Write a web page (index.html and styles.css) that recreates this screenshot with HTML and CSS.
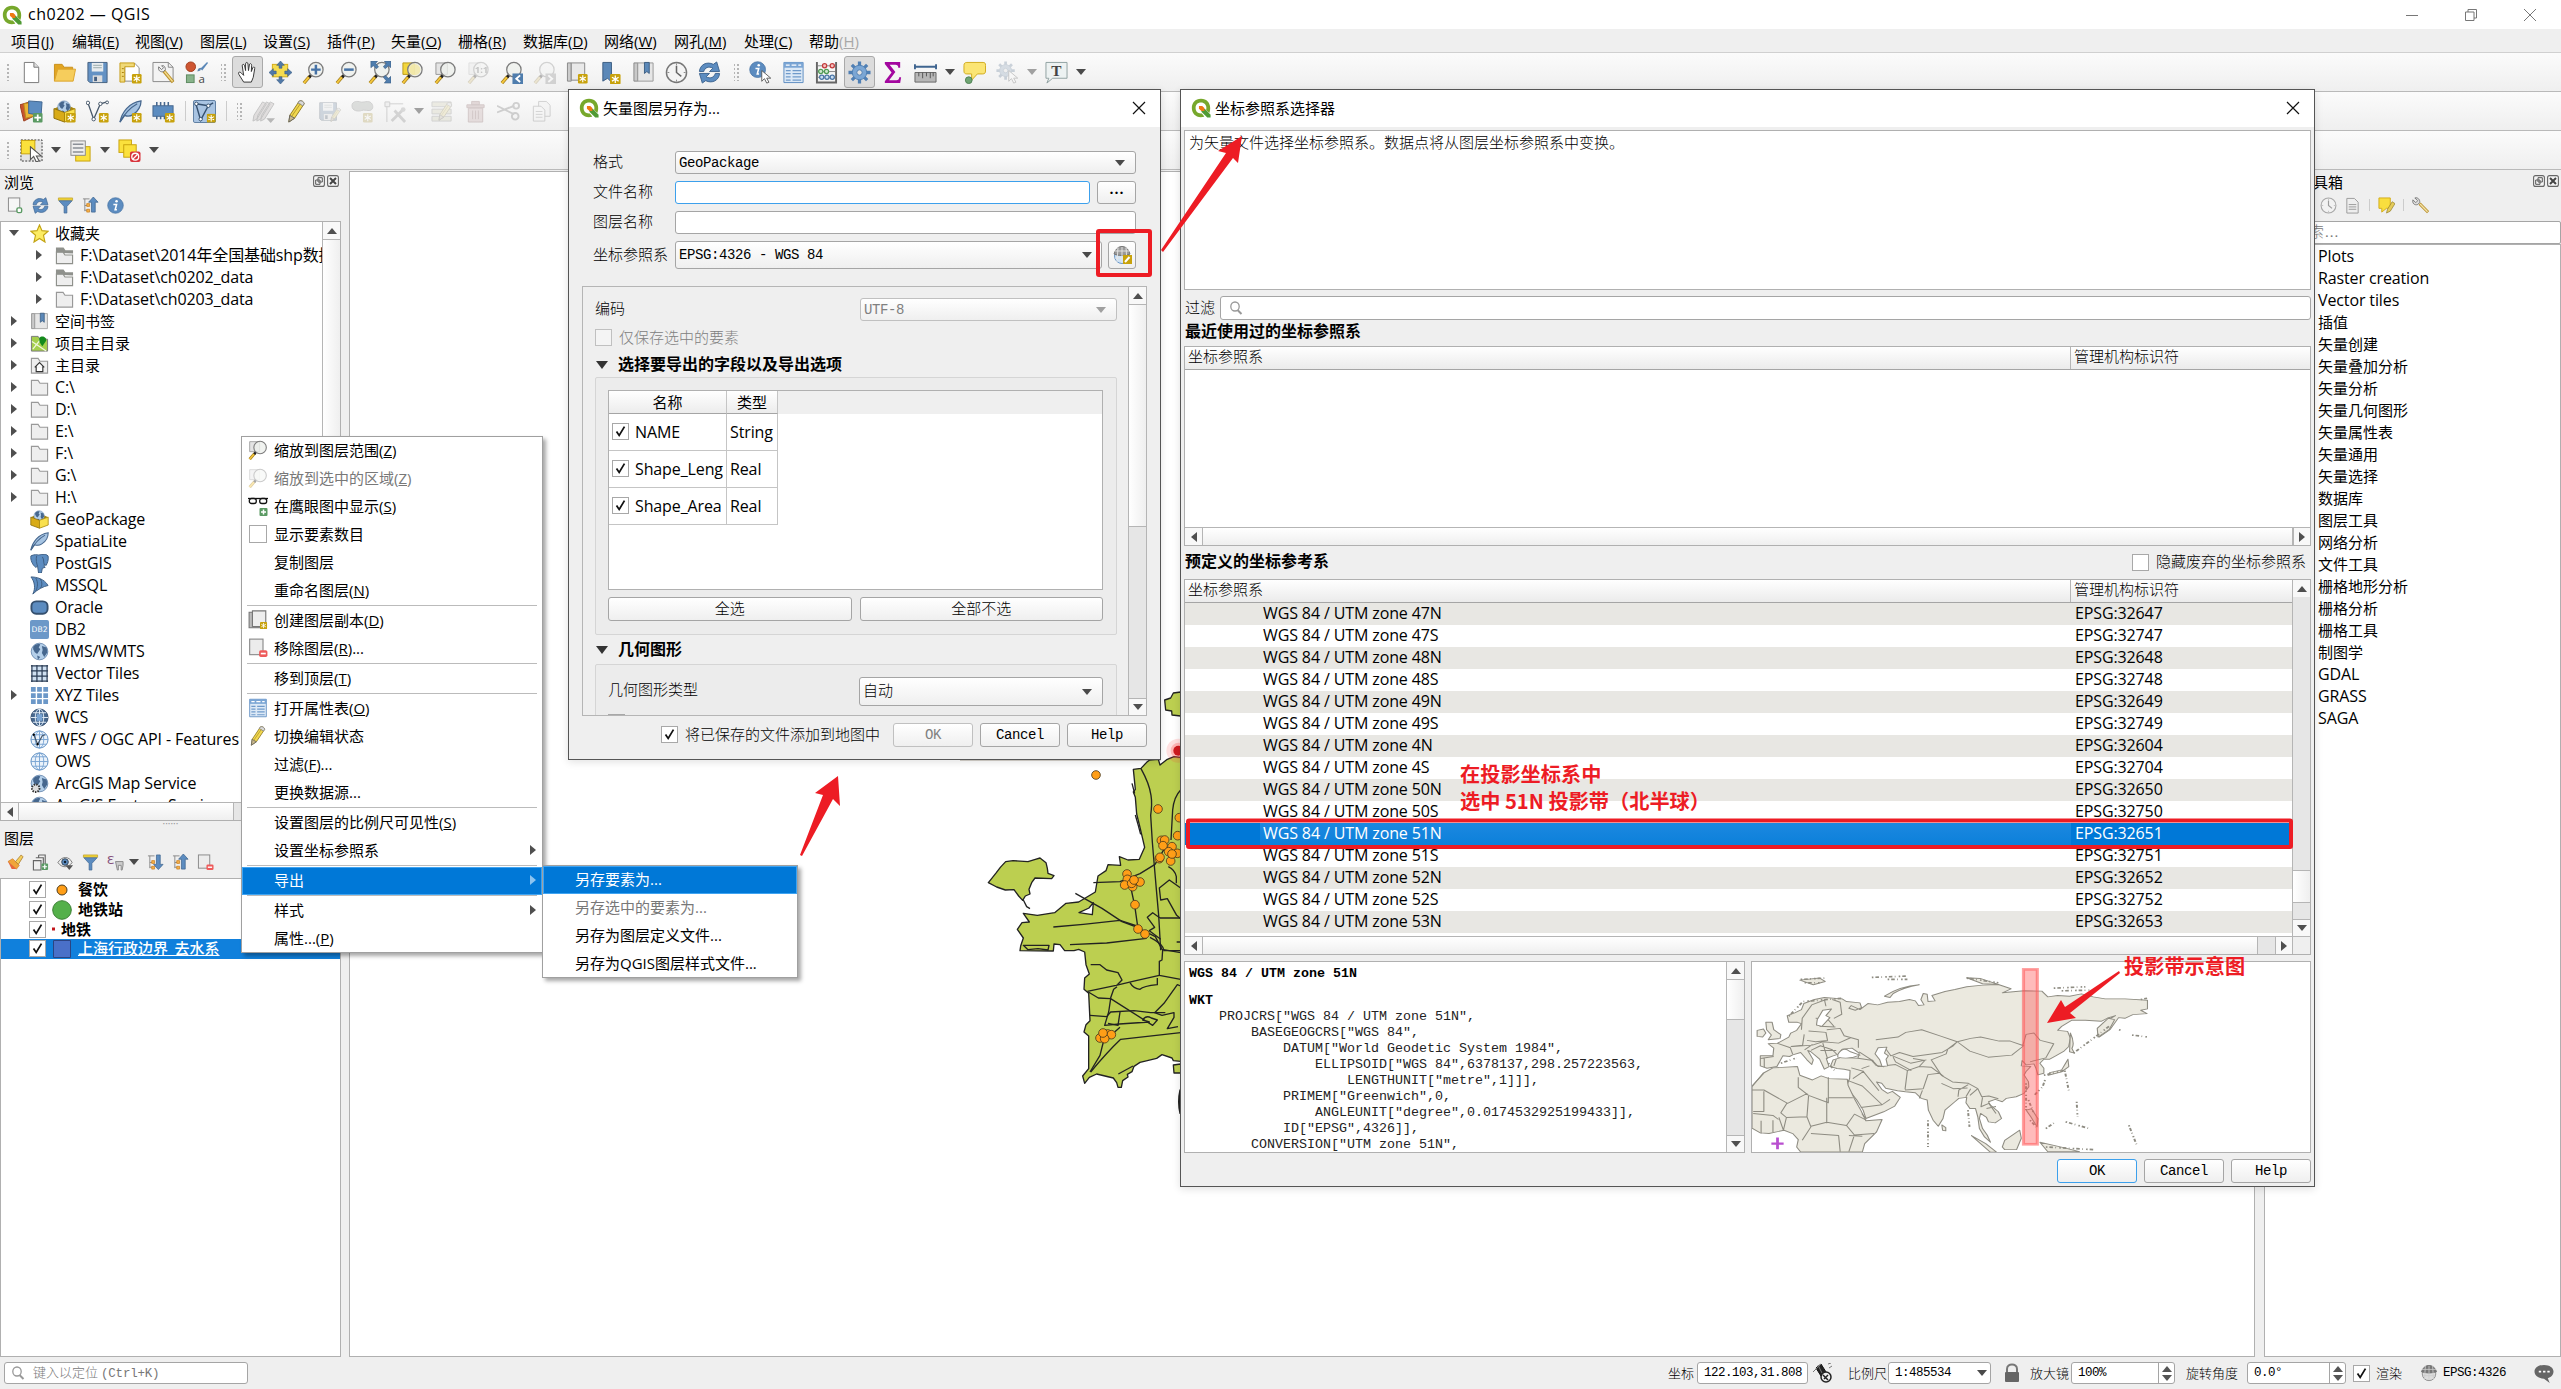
FILE: index.html
```html
<!DOCTYPE html>
<html lang="zh-CN">
<head>
<meta charset="utf-8">
<title>ch0202 — QGIS</title>
<link rel="stylesheet" href="styles.css">
</head>
<body>
<svg class="defs" aria-hidden="true">
  <symbol id="logo" viewBox="0 0 24 24"><path d="M12 1C5 1 1 6 1 12s4 11 11 11c2 0 3-.3 4-.7L13 18.500C8 19 5.500 16 5.500 12S8 5.500 12 5.500s6.500 3 6.500 6.500l-.3 2.500L22 18c.8-1.700 1-4 1-6 0-6-4-11-11-11z" fill="#77a82c"/><path d="M12.500 13h4l7 7v3.500h-4l-7-7z" fill="#4f9a34"/><path d="M9.500 9.500h4l2.500 2.500v3.500h-3.500L9.500 13z" fill="#ee7913"/></symbol>
  <symbol id="b-new" viewBox="0 0 12 12"><rect x=".5" y=".5" width="11" height="11" rx="1.500" fill="#c8a20c"/><path d="M6 2v8M2.500 4l7 4M9.500 4l-7 4" stroke="#fff" stroke-width="1.300"/></symbol>
  <symbol id="mag" viewBox="0 0 24 24"><path d="M2 23l6-7" stroke="#a07c1c" stroke-width="3.500"/><path d="M2 23l5.500-6.500" stroke="#f4c63c" stroke-width="2"/><path d="M7.500 17l2-2.500" stroke="#222" stroke-width="3"/><circle cx="14.500" cy="9" r="7.500" fill="#eef0ec" fill-opacity=".8" stroke="#7c7c7c" stroke-width="1.300"/></symbol>
  <symbol id="new" viewBox="0 0 24 24"><path d="M4.500 1.500h10l5 5v16h-15z" fill="#fff" stroke="#777"/><path d="M14.500 1.500v5h5" fill="#ddd" stroke="#777"/></symbol>
  <symbol id="open" viewBox="0 0 24 24"><path d="M1.500 21V3.500h8l2 3h9V10" fill="#e2a522" stroke="#c98f1a"/><path d="M1.500 21L5 8.500h18.500L21 21z" fill="#f6cd5c" stroke="#dba42c"/></symbol>
  <symbol id="save" viewBox="0 0 24 24"><path d="M2 1.500h20v21H4l-2-2z" fill="#6492c4" stroke="#45607e"/><path d="M6 2h12v9H6z" fill="#e8ecef"/><path d="M7.500 4.500h9M7.500 7h9" stroke="#9aa"/><path d="M7 15h10v7H7z" fill="#ddd"/><path d="M8.500 16.500h3V21h-3z" fill="#455f80"/></symbol>
  <symbol id="layout" viewBox="0 0 24 24"><path d="M6 3h11l4 4v14H6z" fill="#fff" stroke="#888"/><path d="M1 2h15v4H6v16H1z" fill="#f0d978" stroke="#c79c17"/><path d="M3 8h2M3 12h2M3 16h2M9 4h0" stroke="#a87d0c"/><use href="#b-new" x="13" y="13" width="11" height="11"/></symbol>
  <symbol id="mgr" viewBox="0 0 24 24"><path d="M1 1.500h16l5 5v15H1z" fill="#f3f3f3" stroke="#888"/><path d="M17 1.500v5h5" fill="none" stroke="#888"/><path d="M12 10l10 12" stroke="#b98f2a" stroke-width="3.600"/><path d="M13 11l8.500 10.500" stroke="#f2d98a" stroke-width="1.600"/><path d="M7 6c-1 4 2 6 5 5l2-2c0-3-2-5-4-4l2 2-2 2z" fill="#eee" stroke="#777"/></symbol>
  <symbol id="style" viewBox="0 0 24 24"><circle cx="6" cy="6" r="5" fill="#ce5632" stroke="#a3401f"/><path d="M13 11c0-3 2-4 4-4l-1 3z" fill="#5a83ad"/><path d="M16 8l7-7 1 1-6 8z" fill="#5b88b8"/><rect x="1.500" y="14.500" width="8" height="8" fill="#88b38a" stroke="#5d8a60"/><text x="14" y="23" font-size="12" font-family="Open Sans" fill="#444">a</text></symbol>
  <symbol id="hand" viewBox="0 0 24 24"><path d="M8 22L3 14c-1-2 0-3 2-2l3 3L6.500 5c0-2 2-2 2.500 0l1 5V3c0-2 2.300-2 2.500 0l.5 7 1-6c.3-2 2.300-1.500 2.300.5L16 11l1.500-4c.8-1.500 2.500-.8 2 1L18 17l-2 5z" fill="#fff" stroke="#333"/></symbol>
  <symbol id="pan" viewBox="0 0 24 24"><rect x="3.500" y="3.500" width="16" height="13" fill="#f5dc4e" stroke="#d2ab17"/><path d="M12 0l4 4.500h-2.500v3h-3v-3H8zM24 12l-4.500 4v-2.500h-3v-3h3V8zM12 24l-4-4.500h2.500v-3h3v3H16zM0 12l4.500-4v2.500h3v3h-3V16z" fill="#5079a8" stroke="#3c5d82" stroke-width=".6"/></symbol>
  <symbol id="zin" viewBox="0 0 24 24"><use href="#mag"/><path d="M9.500 9h10M14.500 4v10" stroke="#4672a6" stroke-width="2.600"/></symbol>
  <symbol id="zout" viewBox="0 0 24 24"><use href="#mag"/><path d="M9.500 9h10" stroke="#4672a6" stroke-width="2.600"/></symbol>
  <symbol id="zfull" viewBox="0 0 24 24"><use href="#mag"/><path d="M3 0h7L8 2.500 11 6 9 8 5.500 5 3 7zM24 0v7l-2.500-2L18 8l-2-2 3-3.500L17 0zM24 23h-7l2-2.500L16 17l2-2 3.500 3 2.500-2z" fill="#4f7dad" stroke="#3c5d82" stroke-width=".6"/></symbol>
  <symbol id="zsel" viewBox="0 0 24 24"><path d="M2 2h12v12H2z" fill="#f3d63c" stroke="#b99a1c"/><use href="#mag"/><circle cx="14.500" cy="9" r="5.800" fill="#f3e79a" fill-opacity=".7"/></symbol>
  <symbol id="zlay" viewBox="0 0 24 24"><path d="M2 2h12v12H2z" fill="#e4e4e4" stroke="#999"/><use href="#mag"/></symbol>
  <symbol id="z11" viewBox="0 0 24 24"><path d="M2 2h12v12H2z" fill="#e4e4e4" stroke="#aaa"/><use href="#mag"/><text x="8" y="13" font-size="10" font-weight="bold" font-family="Open Sans" fill="#555">1:1</text></symbol>
  <symbol id="zlast" viewBox="0 0 24 24"><use href="#mag"/><path d="M13 13h11v11H13z" fill="#4f7dad"/><path d="M21 15l-4 3.500 4 3.500" fill="none" stroke="#fff" stroke-width="2"/></symbol>
  <symbol id="znext" viewBox="0 0 24 24"><use href="#mag"/><path d="M13 13h11v11H13z" fill="#888"/><path d="M16 15l4 3.500-4 3.500" fill="none" stroke="#fff" stroke-width="2"/></symbol>
  <symbol id="mapview" viewBox="0 0 24 24"><path d="M1.500 2h4v19h-4z" fill="#ccc" stroke="#888"/><path d="M5.500 2h14v18h-14z" fill="#e9e9e9" stroke="#888"/><use href="#b-new" x="12" y="13" width="11" height="11"/></symbol>
  <symbol id="bmnew" viewBox="0 0 24 24"><path d="M4 1.500h9V22l-4-4-5 3z" fill="#5b88b8" stroke="#3c5d82"/><use href="#b-new" x="11" y="13" width="12" height="12"/></symbol>
  <symbol id="book" viewBox="0 0 24 24"><path d="M2 2h4v19H2z" fill="#c9c9c9" stroke="#888"/><path d="M6 2h16v19H6z" fill="#e6e6e6" stroke="#999"/><path d="M13 1.500h5V13l-2.500-2L13 13z" fill="#5b88b8" stroke="#3c5d82"/></symbol>
  <symbol id="clock" viewBox="0 0 24 24"><circle cx="12" cy="12" r="10.500" fill="#f4f4f4" stroke="#777" stroke-width="1.500"/><path d="M12 5v7l5 4" fill="none" stroke="#666" stroke-width="1.600"/><path d="M12 2.500v2M12 19.500v2M2.500 12h2M19.500 12h2" stroke="#888"/></symbol>
  <symbol id="refresh" viewBox="0 0 24 24"><path d="M1.500 11C2 4 9 0 16 3.500L19.500 1l3 10H12l3.500-3.500C11 5 7 7 6 11z" fill="#5c8cc0" stroke="#3f6590"/><path d="M22.500 13C22 20 15 24 8 20.500L4.500 23l-3-10H12l-3.500 3.500C13 19 17 17 18 13z" fill="#5c8cc0" stroke="#3f6590"/></symbol>
  <symbol id="info" viewBox="0 0 24 24"><circle cx="12" cy="12" r="11" fill="#5c8cc0" stroke="#4874a4"/><circle cx="13.500" cy="6" r="1.800" fill="#fff"/><path d="M9 10.500h4.500L11.500 18h2.500" fill="none" stroke="#fff" stroke-width="2.200"/></symbol>
  <symbol id="cursor" viewBox="0 0 12 16"><path d="M1 1v12l3-3 2.500 5 2.500-1-2.500-4.500H11z" fill="#fff" stroke="#555"/></symbol>
  <symbol id="ident" viewBox="0 0 24 24"><use href="#info" x="0" y="0" width="18" height="18"/><use href="#cursor" x="12" y="9" width="12" height="15"/></symbol>
  <symbol id="table" viewBox="0 0 24 24"><path d="M2 1.500h20v21H2z" fill="#dce9f6" stroke="#5c8cc0"/><path d="M2 1.500h20V7H2z" fill="#7aa5d4"/><path d="M4 4.300h4M10 4.300h5M17 4.300h3" stroke="#fff" stroke-width="1.300"/><path d="M4 10h5M11 10h9M4 13.300h5M11 13.300h9M4 16.600h5M11 16.600h9M4 20h5M11 20h9" stroke="#6f9aca" stroke-width="1.300"/></symbol>
  <symbol id="abacus" viewBox="0 0 24 24"><path d="M2 1v22M22 1v22M1 22.500h22" stroke="#666" stroke-width="2"/><path d="M3 5h18M3 11h18M3 17h18" stroke="#888"/><g stroke-width="1.300"><g fill="#f6c2c2" stroke="#c23b3b"><circle cx="10" cy="5" r="2.200"/><circle cx="18" cy="5" r="2.200"/></g><g fill="#cfe8cf" stroke="#4f9a54"><circle cx="6" cy="11" r="2.200"/><circle cx="12" cy="11" r="2.200"/></g><g fill="#cbdff3" stroke="#4874a4"><circle cx="7" cy="17" r="2.200"/><circle cx="12.500" cy="17" r="2.200"/><circle cx="18" cy="17" r="2.200"/></g></g></symbol>
  <symbol id="gear" viewBox="0 0 24 24"><g stroke="#4f7fb4" stroke-width="3.400"><path d="M12 .5v23M.5 12h23M4 4l16 16M20 4L4 20"/></g><circle cx="12" cy="12" r="7.500" fill="#7ba6d4" stroke="#4f7fb4"/><circle cx="12" cy="12" r="2.800" fill="#e3e3e3" stroke="#4f7fb4"/></symbol>
  <symbol id="sigma" viewBox="0 0 24 24"><path d="M4 1h16v6h-2c0-2-1-3-3-3H9l6 7.500L8.500 20H16c2 0 3-1 3-3h2l-1 6H4v-2l7-9L4 3z" fill="#a3089f"/></symbol>
  <symbol id="ruler" viewBox="0 0 24 24"><path d="M1 6h22M1 3.500v5M23 3.500v5" stroke="#3f6590" stroke-width="2"/><path d="M1 12h22v10H1z" fill="#b7b7b7" stroke="#666"/><path d="M5 12v4M9 12v6M13 12v4M17 12v6M20 12v4" stroke="#555"/></symbol>
  <symbol id="tip" viewBox="0 0 24 24"><path d="M4 1.500h17c2 0 2.500 1 2.500 3v6c0 2-1 3-3 3H15L9 20v-6.500H4c-2 0-3-1-3-3v-6c0-2 1-3 3-3z" fill="#fbe574" stroke="#d0aa1c"/><circle cx="6" cy="20" r="3.500" fill="#6fa573" stroke="#4f8354"/></symbol>
  <symbol id="gearcur" viewBox="0 0 24 24"><use href="#gear" width="20" height="20"/><use href="#cursor" x="12" y="9" width="12" height="15"/></symbol>
  <symbol id="text" viewBox="0 0 24 24"><path d="M1 1.500h22V18H8l-6 5 2-5H1z" fill="#edf2f2" stroke="#8fa0a0"/><text x="6.500" y="15.500" font-size="16" font-weight="bold" font-family="Liberation Serif" fill="#444">T</text></symbol>
  <symbol id="layers" viewBox="0 0 24 24"><path d="M0 5l10-3 4 15-10 5z" fill="#c8542e" stroke="#9b3c1c"/><path d="M4 4l12-2 2 14-12 3z" fill="#eab436" stroke="#b98a1c"/><path d="M9 1l14 1-1 14-13-2z" fill="#5c8cc0" stroke="#3f6590"/><rect x="13.500" y="13.500" width="10" height="10" rx="1" fill="#5a9a63"/><path d="M18.500 15v7M15 18.500h7" stroke="#fff" stroke-width="1.800"/></symbol>
  <symbol id="globe" viewBox="0 0 24 24"><circle cx="12" cy="12" r="10.500" fill="#b4cfe9" stroke="#5c7fa8"/><path d="M4 6c3-4 7-4 9-3l-2 4 2 2-4 6-3-2-2-4zM15 5l6 2 1 6-4 6-3-5 1-4zM9 17l4 2-3 3z" fill="#46678e"/></symbol>
  <symbol id="gpkg" viewBox="0 0 24 24"><path d="M1 9l11-5 11 5-11 4z" fill="#a9860c"/><use href="#globe" x="4" y="0" width="15" height="15"/><path d="M1 9l11 4v10L1 19z" fill="#d8ab17" stroke="#8d6f0c"/><path d="M23 9l-11 4v10l11-4z" fill="#f9e04e" stroke="#a9860c"/></symbol>
  <symbol id="gpkgnew" viewBox="0 0 24 24"><use href="#gpkg"/><use href="#b-new" x="13" y="13" width="11" height="11"/></symbol>
  <symbol id="vnew" viewBox="0 0 24 24"><path d="M2 3l6 17L15 4l7-2" fill="none" stroke="#47586a" stroke-width="1.400"/><g fill="#fff" stroke="#47586a"><circle cx="2" cy="3" r="1.800"/><circle cx="8" cy="20" r="1.800"/><circle cx="15" cy="4" r="1.800"/><circle cx="22" cy="2.500" r="1.500"/></g><use href="#b-new" x="13" y="13" width="11" height="11"/></symbol>
  <symbol id="feather" viewBox="0 0 24 24"><path d="M1 23C3 13 10 3 23 1c0 5-3 11-8 14-3 2-7 2-9 1z" fill="#a5c3e2" stroke="#46678e" stroke-width="1.300"/><path d="M1 23C6 14 12 8 19 4" fill="none" stroke="#46678e" stroke-width="1.300"/></symbol>
  <symbol id="feathernew" viewBox="0 0 24 24"><use href="#feather"/><use href="#b-new" x="13" y="13" width="11" height="11"/></symbol>
  <symbol id="chip" viewBox="0 0 24 24"><path d="M5 2v18M9 2v18M13 2v18M17 2v18" stroke="#46678e" stroke-width="1.600"/><rect x="1" y="6" width="21" height="11" fill="#5c8cc0" stroke="#46678e"/><use href="#b-new" x="13" y="13" width="11" height="11"/></symbol>
  <symbol id="vmesh" viewBox="0 0 24 24"><rect x=".5" y=".5" width="23" height="23" rx="1.500" fill="#a9c4e2" stroke="#5b7ba0"/><path d="M3 4l5 17L16 6l5-3M3 4l13 2" fill="none" stroke="#35506f" stroke-width="1.500"/><g fill="#fff" stroke="#35506f"><circle cx="3.500" cy="4" r="1.800"/><circle cx="8" cy="20" r="1.800"/><circle cx="16" cy="6" r="1.800"/></g><use href="#b-new" x="14" y="14" width="10" height="10"/></symbol>
  <symbol id="pencil" viewBox="0 0 24 24"><path d="M4 23l1-7L15 1c2-1 5 1 5 3L10 19z" fill="#f2d84e" stroke="#8f7a24"/><path d="M15 1c2-1 5 1 5 3l-1.500 2-5-3z" fill="#d9d9d9" stroke="#888"/><path d="M4 23l1-7 5 3z" fill="#cbb98a" stroke="#666"/><path d="M7 17L16 4" stroke="#b39a2e"/></symbol>
  <symbol id="pencils" viewBox="0 0 24 24"><g fill="#b9a9a9" stroke="#555"><path d="M1 22l1-6L11 2l4 2L5 20zM5 22l1-6L15 2l4 2L9 20zM9 22l1-6 9-14 4 2-10 16z"/></g><path d="M15 19h9l-4.500 5z" fill="#333"/></symbol>
  <symbol id="savedit" viewBox="0 0 24 24"><use href="#save" width="21"/><use href="#pencil" x="11" y="8" width="15" height="15"/></symbol>
  <symbol id="blob" viewBox="0 0 24 24"><path d="M1 6c0-5 6-5 9-4s8-2 11 1 2 8-2 8-5-1-8 0-10 1-10-5z" fill="#9aa49a" stroke="#777"/><use href="#b-new" x="12" y="13" width="11" height="11"/></symbol>
  <symbol id="vertex" viewBox="0 0 24 24"><path d="M1 2h5v5H1zM3 7v16M6 4h14" fill="#ddd" stroke="#777"/><path d="M8 22L19 11M11 11l11 12" stroke="#888" stroke-width="3"/><circle cx="20" cy="10" r="2.500" fill="#999"/></symbol>
  <symbol id="formedit" viewBox="0 0 24 24"><path d="M1 2h20v5H1zM1 9.500h20v5H1zM1 17h20v5H1z" fill="#d4d19c" stroke="#888"/><use href="#pencil" x="5" y="1" width="20" height="22"/></symbol>
  <symbol id="trash" viewBox="0 0 24 24"><path d="M3 5h18v3H3zM8 1.500h8V5H8z" fill="#c98a8a" stroke="#a05c5c"/><path d="M4.500 8.500h15V23h-15z" fill="#dba5a5" stroke="#a05c5c"/><path d="M9 11v9M12 11v9M15 11v9" stroke="#a05c5c"/></symbol>
  <symbol id="cut" viewBox="0 0 24 24"><path d="M0 6l18 9M0 13l18-7" stroke="#777" stroke-width="2"/><g fill="none" stroke="#777" stroke-width="2"><circle cx="20" cy="6" r="3"/><circle cx="19" cy="17" r="3.500"/></g></symbol>
  <symbol id="copy" viewBox="0 0 24 24"><path d="M9 1.500h8l4 4V17H9z" fill="#eee" stroke="#777"/><path d="M3.500 6.500h8l4 4V22h-12z" fill="#f5f5f5" stroke="#777"/><path d="M6 12h7M6 15h7M6 18h7" stroke="#888"/></symbol>
  <symbol id="selrect" viewBox="0 0 24 24"><rect x="1" y="1" width="22" height="22" fill="#e4e4e4" stroke="#333" stroke-dasharray="2 1.500"/><rect x="1.500" y="1.500" width="14" height="14" fill="#fbe13c" stroke="#c8a20c"/><use href="#cursor" x="9" y="7" width="15" height="18"/></symbol>
  <symbol id="selform" viewBox="0 0 24 24"><rect x="7" y="8" width="15" height="15" fill="#fbe13c" stroke="#c8a20c"/><rect x="2" y="2" width="15" height="15" fill="#eee" stroke="#888"/><path d="M4 5.500h11M4 9.500h11M4 13.500h11" stroke="#8b9097" stroke-width="1.600"/></symbol>
  <symbol id="desel" viewBox="0 0 24 24"><rect x="1" y="1" width="13" height="13" fill="#fbe13c" stroke="#c8a20c"/><rect x="6" y="6" width="13" height="13" fill="#fbe13c" stroke="#c8a20c"/><rect x="12.500" y="13" width="11" height="11" rx="2" fill="#d8343c"/><circle cx="18" cy="18.500" r="3.600" fill="none" stroke="#fff" stroke-width="1.400"/><path d="M15.500 21l5-5" stroke="#fff" stroke-width="1.400"/></symbol>
  <symbol id="addlay" viewBox="0 0 18 18"><rect x="1.500" y="1" width="12" height="14" fill="#f6f6f6" stroke="#888"/><rect x="10.500" y="11.500" width="5" height="5" rx="1.500" fill="#fff" stroke="#5a9a63" stroke-width="1.500"/></symbol>
  <symbol id="funnel" viewBox="0 0 18 18"><path d="M1.500 1h15v2.500h-15z" fill="#f3d63c" stroke="#b99a1c" stroke-width=".7"/><path d="M2 4h14l-5.500 6v7H7.500v-7z" fill="#5c8cc0" stroke="#3f6590" stroke-width=".7"/></symbol>
  <symbol id="collapse" viewBox="0 0 18 18"><path d="M1 2h7M3 2v13M3 9h3M3 14h3" stroke="#888" fill="none"/><path d="M5 7h3v3H5zM5 13h3v3H5z" fill="#f5b14a" stroke="#c87a16" stroke-width=".7"/><path d="M12 0l5 5.500h-3V16h-4V5.500H7z" fill="#5c8cc0" stroke="#3f6590" stroke-width=".8"/></symbol>
  <symbol id="expand" viewBox="0 0 18 18"><path d="M1 2h7M3 2v13M3 9h3M3 14h3" stroke="#888" fill="none"/><path d="M5 7h3v3H5zM5 13h3v3H5z" fill="#f5b14a" stroke="#c87a16" stroke-width=".7"/><path d="M12 16.500L7 11h3V1h4v10h3z" fill="#5c8cc0" stroke="#3f6590" stroke-width=".8"/></symbol>
  <symbol id="brush" viewBox="0 0 18 18"><path d="M1 8l5-3 7 7-3 4z" fill="#f0a63a" stroke="#d07a20" stroke-width=".7"/><path d="M1 8l4 8 5 0z" fill="#e8663a"/><path d="M9 8l6-7 2 2-5 8z" fill="#f4cf5a" stroke="#a7762a" stroke-width=".8"/></symbol>
  <symbol id="group" viewBox="0 0 18 18"><path d="M1.500 7h8v10h-8zM4 4h8v11M7 1h7v11M7 1v3" fill="none" stroke="#666" stroke-width="1.200"/><rect x="10" y="10" width="7" height="7" rx="1" fill="#5a9a63"/><path d="M13.500 11v5M11 13.500h5" stroke="#fff" stroke-width="1.300"/></symbol>
  <symbol id="eye" viewBox="0 0 18 18"><path d="M1 9c4-7 12-7 15 0-4 6-11 6-15 0z" fill="#eee" stroke="#777"/><circle cx="8.500" cy="8.500" r="3.500" fill="#5c8cc0" stroke="#345"/><circle cx="8.500" cy="8.500" r="1.300" fill="#123"/><path d="M9 12h8l-4 5z" fill="#555"/></symbol>
  <symbol id="eps" viewBox="0 0 18 18"><text x="0" y="11" font-size="16" font-family="Open Sans" fill="#86537c">ε</text><path d="M9 8h8v4l-1 5h-1v-5h-3v5h-1z" fill="#ccc" stroke="#888"/></symbol>
  <symbol id="rmlay" viewBox="0 0 18 18"><rect x="1.500" y="1" width="12" height="14" fill="#ececec" stroke="#888"/><rect x="10" y="11" width="7.500" height="6" rx="1.500" fill="#ee5a5a"/><path d="M11.500 14h4.500" stroke="#fff" stroke-width="1.500"/></symbol>
  <symbol id="dup" viewBox="0 0 18 18"><path d="M1 2h11v14H1z" fill="#bbb" stroke="#777"/><path d="M4 .8h12V15H4z" fill="#eee" stroke="#777"/><use href="#b-new" x="10.500" y="10.500" width="7" height="7"/></symbol>
  <symbol id="star" viewBox="0 0 20 20"><path d="M10 1l2.600 6 6.400.6-4.800 4.300L15.800 19 10 15.300 4.200 19l1.600-7.100L1 7.600 7.400 7z" fill="#fcec62" stroke="#c3a413" stroke-width="1.200"/></symbol>
  <symbol id="folder" viewBox="0 0 20 20"><path d="M1.500 18V2.500h7l2 3h8V18z" fill="#eee" stroke="#999" stroke-width="1.200"/></symbol>
  <symbol id="folderl" viewBox="0 0 20 20"><path d="M1 7V1.500h8l2 3h8V8" fill="#8f918c"/><path d="M1.500 18.500V6.500h7l2 3h8v9z" fill="#eee" stroke="#8f918c" stroke-width="1.200"/></symbol>
  <symbol id="proj" viewBox="0 0 20 20"><path d="M1.500 18V2.500h7l2 3h8V18z" fill="#a5cf4c" stroke="#777"/><path d="M2 8l15 10M3 16l8-10" stroke="#f2f7de" stroke-width="1.300"/><path d="M10 4c2-3 8-1 7 3l-4 6c-2-3-4-5-3-9z" fill="#148a1c"/></symbol>
  <symbol id="home" viewBox="0 0 20 20"><use href="#folder"/><path d="M5 12l5-5 5 5M6.500 11v5.500h7V11" fill="#fff" stroke="#333" stroke-width="1.200"/></symbol>
  <symbol id="elephant" viewBox="0 0 20 20"><path d="M1 2c4-2 6-1 8-1s7-2 10 1c1 4-1 8-2 10l-2-1v2l1 1-3 1-1 5h-3l-1-7-2 1C3 12 0 6 1 2z" fill="#5c8cc0" stroke="#3c5d82"/><path d="M7 2c-1 4 0 8 1 11M13 3c2 3 1 6 2 8" fill="none" stroke="#3c5d82"/></symbol>
  <symbol id="mssql" viewBox="0 0 20 20"><path d="M1 1c6 0 14 2 18 9-5 1-11 4-16 9C6 13 5 6 1 1z" fill="#5c8cc0" stroke="#3c5d82"/><path d="M6 2c3 5 2 10 0 14M11 3c2 4 2 7 0 10" fill="none" stroke="#3c5d82"/></symbol>
  <symbol id="oracle" viewBox="0 0 20 20"><rect x="1.500" y="3.500" width="17" height="13" rx="5" fill="#5c8cc0" stroke="#35506f" stroke-width="2"/></symbol>
  <symbol id="db2" viewBox="0 0 20 20"><rect width="20" height="20" rx="2" fill="#6c98c8"/><text x="1.500" y="13" font-size="8" textLength="17" font-family="DejaVu Sans" fill="#fff">DB2</text></symbol>
  <symbol id="grid" viewBox="0 0 20 20"><path d="M2 2h16v16H2z" fill="#cfe0f1"/><path d="M2 1v18M7.300 1v18M12.700 1v18M18 1v18M1 2h18M1 7.300h18M1 12.700h18M1 18h18" stroke="#2b3d55" stroke-width="1.300"/></symbol>
  <symbol id="tiles" viewBox="0 0 20 20"><path d="M1 1h5v5H1zM7.500 1h5v5h-5zM14 1h5v5h-5zM1 7.500h5v5H1zM7.500 7.500h5v5h-5zM14 7.500h5v5h-5zM1 14h5v5H1zM7.500 14h5v5h-5zM14 14h5v5h-5z" fill="#6c98c8"/></symbol>
  <symbol id="wcs" viewBox="0 0 20 20"><circle cx="10" cy="10" r="9" fill="#46678e" stroke="#2f4a6b"/><path d="M1 10h18M10 1v18M3 5h14M3 15h14" stroke="#e4eef8"/><ellipse cx="10" cy="10" rx="4.500" ry="9" fill="none" stroke="#e4eef8"/><path d="M7 6.500h6v7H7z" fill="#7aa5d4"/></symbol>
  <symbol id="ows" viewBox="0 0 20 20"><circle cx="10" cy="10" r="9" fill="#eaf2fa" stroke="#5c8cc0"/><path d="M1 10h18M10 1v18M3 5h14M3 15h14" stroke="#7aa5d4"/><ellipse cx="10" cy="10" rx="4.500" ry="9" fill="none" stroke="#7aa5d4"/></symbol>
  <symbol id="wfs" viewBox="0 0 20 20"><use href="#ows"/><path d="M4 5l4 10 5-9 3-1" fill="none" stroke="#46586c" stroke-width="1.300"/><circle cx="4" cy="5" r="1.200"/><circle cx="8" cy="15" r="1.200"/></symbol>
  <symbol id="arcgis" viewBox="0 0 20 20"><use href="#globe" width="20" height="20"/><circle cx="6" cy="15" r="4" fill="#ddd" stroke="#333" stroke-dasharray="1.500 1.200" stroke-width="2"/></symbol>
  <symbol id="glasses" viewBox="0 0 20 20"><path d="M0 2.500h20" stroke="#111" stroke-width="1.300"/><rect x="1.300" y="2.500" width="7" height="5" rx="2.300" fill="#fff" stroke="#111" stroke-width="1.300"/><rect x="11.700" y="2.500" width="7" height="5" rx="2.300" fill="#fff" stroke="#111" stroke-width="1.300"/><rect x="11.500" y="12" width="8" height="8" rx="1" fill="#5a9a63"/><path d="M15.500 13.500v5M13 16h5" stroke="#fff" stroke-width="1.500"/></symbol>
  <symbol id="crs" viewBox="0 0 20 20"><circle cx="10" cy="11" r="7.500" fill="#cfe3f5" stroke="#6c98c8"/><path d="M2 9C4 3 7 1.500 10 1.500S16 3 18 9c-4 2-12 2-16 0z" fill="#9a9a9a" stroke="#777"/><path d="M3 6h14M10 2v16M6 2.500L5 17M14 2.500L15 17M3 13h14" stroke="#e8e8e8" stroke-width=".9" fill="none"/></symbol>
  <symbol id="wrench" viewBox="0 0 18 18"><path d="M8 7l9 9" stroke="#b98f2a" stroke-width="3.200"/><path d="M8.500 7.500L16.500 15.500" stroke="#f2e2a8" stroke-width="1.500"/><path d="M3 1L6 4 4 6 1 3c-1 4 2 6 5 5l2-2C9 3 6 0 3 1z" fill="#ddd" stroke="#777"/></symbol>
  <symbol id="note" viewBox="0 0 18 18"><path d="M1 1h12v11H9l-5 4v-4H1z" fill="#f9de3e" stroke="#d2ab17"/><path d="M9 17l1-4 5-8 3 2-5 8z" fill="#e4cb5a" stroke="#8f7a24" stroke-width=".7"/></symbol>
  <symbol id="page" viewBox="0 0 18 18"><path d="M3 1.500h8l4 4V17H3z" fill="#eee" stroke="#999"/><path d="M5 8h8M5 10.500h8M5 13h8" stroke="#999"/></symbol>
  <symbol id="lens" viewBox="0 0 14 14"><ellipse cx="6" cy="5.500" rx="4.200" ry="4.500" fill="none" stroke="#999" stroke-width="1.300"/><path d="M8.500 9l4 4" stroke="#999" stroke-width="2"/></symbol>
  <symbol id="float" viewBox="0 0 12 12"><rect x=".6" y=".6" width="10.800" height="10.800" rx="2" fill="#f4f4f4" stroke="#666" stroke-width="1.100"/><path d="M5 2.700h4.300V7H5zM2.700 5H7v4.300H2.700z" fill="#f4f4f4" stroke="#555"/></symbol>
  <symbol id="xbox" viewBox="0 0 12 12"><rect x=".6" y=".6" width="10.800" height="10.800" rx="2" fill="#f4f4f4" stroke="#666" stroke-width="1.100"/><path d="M3 3l6 6M9 3l-6 6" stroke="#444" stroke-width="2"/></symbol>
  <symbol id="tick" viewBox="0 0 17 17"><path d="M4 8.500l3 4.500L13 3" fill="none" stroke="#111" stroke-width="2"/></symbol>
  <symbol id="close" viewBox="0 0 14 14"><path d="M1 1l12 12M13 1L1 13" stroke="#111" stroke-width="1.200"/></symbol>
</svg>

<div class="app">
  <header class="titlebar">
    <svg class="i20"><use href="#logo"/></svg><span class="apptitle">ch0202 — QGIS</span>
    <div class="winbtns">
      <svg viewBox="0 0 14 14"><path d="M1 7.500h12" stroke="#777"/></svg>
      <svg viewBox="0 0 14 14"><path d="M1.500 4h8.500v8.500H1.500zM4 4V1.500h8.500V10H10" fill="none" stroke="#777"/></svg>
      <svg viewBox="0 0 14 14"><path d="M1 1l12 12M13 1L1 13" stroke="#777"/></svg>
    </div>
  </header>
  <nav class="menubar">
    <span style="width:61px">项目(<u>J</u>)</span><span style="width:63px">编辑(<u>E</u>)</span><span style="width:65px">视图(<u>V</u>)</span><span style="width:63px">图层(<u>L</u>)</span><span style="width:64px">设置(<u>S</u>)</span><span style="width:64px">插件(<u>P</u>)</span><span style="width:67px">矢量(<u>O</u>)</span><span style="width:65px">栅格(<u>R</u>)</span><span style="width:81px">数据库(<u>D</u>)</span><span style="width:70px">网络(<u>W</u>)</span><span style="width:70px">网孔(<u>M</u>)</span><span style="width:65px">处理(<u>C</u>)</span><span>帮助<i>(<u>H</u>)</i></span>
  </nav>
  <div class="toolbar">
    <b class="grip"></b>
    <span class="tb"><svg><use href="#new"/></svg></span><span class="tb"><svg><use href="#open"/></svg></span><span class="tb"><svg><use href="#save"/></svg></span><span class="tb"><svg><use href="#layout"/></svg></span><span class="tb"><svg><use href="#mgr"/></svg></span><span class="tb"><svg><use href="#style"/></svg></span>
    <b class="grip wide"></b>
    <span class="tb on"><svg><use href="#hand"/></svg></span><span class="tb"><svg><use href="#pan"/></svg></span><span class="tb"><svg><use href="#zin"/></svg></span><span class="tb"><svg><use href="#zout"/></svg></span><span class="tb"><svg><use href="#zfull"/></svg></span><span class="tb"><svg><use href="#zsel"/></svg></span><span class="tb"><svg><use href="#zlay"/></svg></span><span class="tb off"><svg><use href="#z11"/></svg></span><span class="tb"><svg><use href="#zlast"/></svg></span><span class="tb off"><svg><use href="#znext"/></svg></span><span class="tb"><svg><use href="#mapview"/></svg></span><span class="tb"><svg><use href="#bmnew"/></svg></span><span class="tb"><svg><use href="#book"/></svg></span><span class="tb"><svg><use href="#clock"/></svg></span><span class="tb"><svg><use href="#refresh"/></svg></span>
    <b class="grip wide"></b>
    <span class="tb"><svg><use href="#ident"/></svg></span><span class="tb"><svg><use href="#table"/></svg></span><span class="tb"><svg><use href="#abacus"/></svg></span><span class="tb on"><svg><use href="#gear"/></svg></span><span class="tb"><svg><use href="#sigma"/></svg></span><span class="tb"><svg><use href="#ruler"/></svg></span><b class="drop"></b><span class="tb"><svg><use href="#tip"/></svg></span><span class="tb off"><svg><use href="#gearcur"/></svg></span><b class="drop off"></b><span class="tb"><svg><use href="#text"/></svg></span><b class="drop"></b>
  </div>
  <div class="toolbar">
    <b class="grip"></b>
    <span class="tb"><svg><use href="#layers"/></svg></span><span class="tb"><svg><use href="#gpkgnew"/></svg></span><span class="tb"><svg><use href="#vnew"/></svg></span><span class="tb"><svg><use href="#feathernew"/></svg></span><span class="tb"><svg><use href="#chip"/></svg></span>
    <b class="vsep"></b><span class="tb"><svg><use href="#vmesh"/></svg></span><b class="vsep"></b>
    <b class="grip wide"></b>
    <span class="tb off"><svg><use href="#pencils"/></svg></span><span class="tb"><svg><use href="#pencil"/></svg></span><span class="tb off"><svg><use href="#savedit"/></svg></span><span class="tb off"><svg><use href="#blob"/></svg></span><span class="tb off"><svg><use href="#vertex"/></svg></span><b class="drop off narrow"></b><span class="tb off"><svg><use href="#formedit"/></svg></span><span class="tb off"><svg><use href="#trash"/></svg></span><span class="tb off"><svg><use href="#cut"/></svg></span><span class="tb off"><svg><use href="#copy"/></svg></span>
  </div>
  <div class="toolbar last">
    <b class="grip"></b>
    <span class="tb"><svg><use href="#selrect"/></svg></span><b class="drop"></b><span class="tb"><svg><use href="#selform"/></svg></span><b class="drop"></b><span class="tb"><svg><use href="#desel"/></svg></span><b class="drop"></b>
  </div>

  <main class="work">
    <aside class="left">
      <div class="docktitle"><span>浏览</span><svg><use href="#float"/></svg><svg><use href="#xbox"/></svg></div>
      <div class="dockbar"><svg><use href="#addlay"/></svg><svg><use href="#refresh"/></svg><svg><use href="#funnel"/></svg><svg><use href="#collapse"/></svg><svg><use href="#info"/></svg></div>
      <div class="browser">
        <div class="treewrap">
          <ul class="tree">
            <li><b class="dn"></b><svg><use href="#star"/></svg>收藏夹</li>
            <li class="sub en"><b class="rt"></b><svg><use href="#folderl"/></svg>F:\Dataset\2014年全国基础shp数据</li>
            <li class="sub en"><b class="rt"></b><svg><use href="#folderl"/></svg>F:\Dataset\ch0202_data</li>
            <li class="sub en"><b class="rt"></b><svg><use href="#folder"/></svg>F:\Dataset\ch0203_data</li>
            <li><b class="rt"></b><svg><use href="#book"/></svg>空间书签</li>
            <li><b class="rt"></b><svg><use href="#proj"/></svg>项目主目录</li>
            <li><b class="rt"></b><svg><use href="#home"/></svg>主目录</li>
            <li class="en"><b class="rt"></b><svg><use href="#folder"/></svg>C:\</li>
            <li class="en"><b class="rt"></b><svg><use href="#folder"/></svg>D:\</li>
            <li class="en"><b class="rt"></b><svg><use href="#folder"/></svg>E:\</li>
            <li class="en"><b class="rt"></b><svg><use href="#folder"/></svg>F:\</li>
            <li class="en"><b class="rt"></b><svg><use href="#folder"/></svg>G:\</li>
            <li class="en"><b class="rt"></b><svg><use href="#folder"/></svg>H:\</li>
            <li class="en"><b></b><svg><use href="#gpkg"/></svg>GeoPackage</li>
            <li class="en"><b></b><svg><use href="#feather"/></svg>SpatiaLite</li>
            <li class="en"><b></b><svg><use href="#elephant"/></svg>PostGIS</li>
            <li class="en"><b></b><svg><use href="#mssql"/></svg>MSSQL</li>
            <li class="en"><b></b><svg><use href="#oracle"/></svg>Oracle</li>
            <li class="en"><b></b><svg><use href="#db2"/></svg>DB2</li>
            <li class="en"><b></b><svg><use href="#globe"/></svg>WMS/WMTS</li>
            <li class="en"><b></b><svg><use href="#grid"/></svg>Vector Tiles</li>
            <li class="en"><b class="rt"></b><svg><use href="#tiles"/></svg>XYZ Tiles</li>
            <li class="en"><b></b><svg><use href="#wcs"/></svg>WCS</li>
            <li class="en"><b></b><svg><use href="#wfs"/></svg>WFS / OGC API - Features</li>
            <li class="en"><b></b><svg><use href="#ows"/></svg>OWS</li>
            <li class="en"><b></b><svg><use href="#arcgis"/></svg>ArcGIS Map Service</li>
            <li class="en"><b></b><svg><use href="#arcgis"/></svg>ArcGIS Feature Service</li>
          </ul>
          <div class="vscroll"><b class="btn up"></b><b class="thumb grow"></b></div>
        </div>
        <div class="hscroll"><b class="btn lf"></b><b class="thumb" style="width:216px"></b></div>
      </div>
      <div class="split">······</div>
      <div class="docktitle lay"><span>图层</span></div>
      <div class="dockbar lay"><svg><use href="#brush"/></svg><svg><use href="#group"/></svg><svg><use href="#eye"/></svg><svg><use href="#funnel"/></svg><svg><use href="#eps"/></svg><b class="drop"></b><svg><use href="#expand"/></svg><svg><use href="#collapse"/></svg><svg><use href="#rmlay"/></svg></div>
      <div class="layers">
        <div class="layer"><svg class="ck"><use href="#tick"/></svg><svg class="sy" viewBox="0 0 20 20"><circle cx="10" cy="10" r="5" fill="#ff9e17" stroke="#4d3b1c"/></svg>餐饮</div>
        <div class="layer"><svg class="ck"><use href="#tick"/></svg><svg class="sy" viewBox="0 0 20 20"><circle cx="10" cy="10" r="9.300" fill="#54b04a" stroke="#3d8035"/></svg>地铁站</div>
        <div class="layer"><svg class="ck"><use href="#tick"/></svg><svg class="sy tiny" viewBox="0 0 4 20"><path d="M0 8.500h3v3H0z" fill="#c3161c"/></svg>地铁</div>
        <div class="layer sel"><svg class="ck"><use href="#tick"/></svg><svg class="sy" viewBox="0 0 20 20"><path d="M1.500 1.500h17v17h-17z" fill="#4a70c8" stroke="#2b4482"/></svg><u>上海行政边界_去水系</u></div>
      </div>
    </aside>

    <section class="canvas">
      <svg class="shmap" viewBox="0 0 720 1380">
        <path class="line" d="M0 239h602" style="stroke:#57482e"/>
        <g class="land">
          <path d="M662 36l-22 3-8 15-18 6 3 30 18 3 1 12 26 3z"/>
          <path d="M85 608l8-10 16-20 12-16 16-17 22-3 45 3 22-7 14-4 18 14 4 17 2 15 18 7-7 9-50-2-10 14-8 20 3 14-14 6-8 13-12-13-14-19-26 1-26-9z"/>
          <path d="M520 268l23-3 17-18 9-7 26-2 5 17 20-16 22-9 20 2v912l-22-2-4-8-30-10-16 11-50 12-18 12-6 16-14 8 2 8-16 11-4 20-10 0-4-14-10-14-50-12-22 10-14 18-6-22 18-22V1068l-14-12 6-22 12-12-4-82-14-12 2-34 14-12-10-28-4-38-18-8-14 4-28 0-14-18-18-2-2 21-100-1 2-14 8-24-18-26 14-20 22-2-18-26 42 6 52-8 34-28 38-4 50-30 8-48 24-16 6-18 38 2-4-26 26 10 34-2 16-36-14-60-10-40-4-50-6-16 6-8z"/>
          <path d="M190 796h77l-3 14-30-4-30 3zM640 1155l2 24h20v-27zM660 1230q-8 35 0 70z"/>
        </g>
        <g class="line">
          <path d="M543 266q25 45 30 80 4 25-1 60l5 80 5 60 6 70 8 90 6 105"/><path d="M662 330q-20 20-24 60l-5 90"/>
          <path d="M400 608l80-3 60-24 45-28 36-60"/><path d="M346 640l80 45 60 40 40 15 60 30 20 38 56 10"/><path d="M280 741l90-8 110-12 60 20"/><path d="M330 794l110-5 120-14"/><path d="M608 810l-2 30-8 4v42l64 12"/><path d="M598 886l-70 16-60 14-86 18"/>
          <path d="M392 854l28 0 20 16 34 8 12 22-14 14"/><path d="M514 630l10 46 10 70"/><path d="M400 668l-3 36-40-6 30-14z" fill="#fff"/>
          <path d="M510 908q10 18 30 20 10-10 52-14v-20"/><path d="M385 936l30 18 36 2 10-28 10-8"/><path d="M390 1006l50 4 12-14 70-4 50 6 44 0"/><path d="M452 956l-6 40-12 40 44-4 90-6-20-6q10-16 26-6l18 6-14 16z"/><path d="M480 996l-6 40-30-6"/><path d="M662 918l-10-4-40 56-28 28 22 8 36-8 0 14-20 34 32-6"/>
          <path d="M392 1176q50-60 90-98l180-20"/><path d="M390 1176l30-50 10-40 50-44"/><path d="M475 1182l44-24"/><path d="M662 624l-34-24-30 24 4 36 20-4 28 50 12 10"/><path d="M600 714l-22-16-16 14 22 30-16 10 34 26"/><path d="M625 560q20 10 24 30v20"/><path d="M600 714h62M570 772q40 20 42 40h50M650 786h12"/><path d="M190 660l10 20 10 6"/><path d="M516 310l8 30M526 405l8 28 8 30"/>
        </g>
        <g class="pts">
          <circle cx="408" cy="285" r="13"/><circle cx="594" cy="387" r="13"/><circle cx="658" cy="413" r="13"/><circle cx="653" cy="467" r="13"/><circle cx="604" cy="481" r="13"/><circle cx="614" cy="480" r="13"/><circle cx="609" cy="497" r="13"/><circle cx="636" cy="500" r="13"/><circle cx="626" cy="515" r="13"/><circle cx="632" cy="543" r="13"/><circle cx="598" cy="536" r="13"/><circle cx="600" cy="532" r="13"/><circle cx="652" cy="520" r="13"/><circle cx="636" cy="522" r="13"/>
          <circle cx="501" cy="582" r="13"/><circle cx="518" cy="620" r="13"/><circle cx="502" cy="598" r="13"/><circle cx="540" cy="606" r="13"/><circle cx="494" cy="615" r="13"/><circle cx="515" cy="610" r="13"/><circle cx="522" cy="600" r="13"/><circle cx="525" cy="674" r="13"/><circle cx="534" cy="747" r="13"/><circle cx="555" cy="762" r="13"/>
          <circle cx="420" cy="1074" r="13"/><circle cx="443" cy="1062" r="13"/><circle cx="454" cy="1064" r="13"/><circle cx="434" cy="1076" r="13"/><circle cx="429" cy="1059" r="13"/>
        </g>
        <circle cx="655" cy="212" r="36" fill="#f33" opacity=".15"/><circle cx="656" cy="212" r="24" fill="#f33" opacity=".25"/><circle cx="655" cy="212" r="15" fill="#cf1a1f"/>
      </svg>
    </section>

    <aside class="right">
      <div class="docktitle"><span>处理工具箱</span><svg><use href="#float"/></svg><svg><use href="#xbox"/></svg></div>
      <div class="dockbar"><svg class="g"><use href="#clock"/></svg><svg><use href="#page"/></svg><b></b><svg><use href="#note"/></svg><b></b><svg><use href="#wrench"/></svg></div>
      <div class="find song">搜索...</div>
      <ul class="tools"><li class="en">Plots</li><li class="en">Raster creation</li><li class="en">Vector tiles</li><li>插值</li><li>矢量创建</li><li>矢量叠加分析</li><li>矢量分析</li><li>矢量几何图形</li><li>矢量属性表</li><li>矢量通用</li><li>矢量选择</li><li>数据库</li><li>图层工具</li><li>网络分析</li><li>文件工具</li><li>栅格地形分析</li><li>栅格分析</li><li>栅格工具</li><li>制图学</li><li class="en">GDAL</li><li class="en">GRASS</li><li class="en">SAGA</li></ul>
    </aside>
  </main>

  <footer class="status">
    <div class="field locate"><svg class="i14"><use href="#lens"/></svg><span>键入以定位<span class="m">(Ctrl+K)</span></span></div>
    <span class="lb" style="width:29px">坐标</span><div class="field m" style="width:111px">122.103,31.808</div>
    <svg class="sat" viewBox="0 0 20 20"><path d="M3 5l5-4 5 8-5 4z" fill="#222" stroke="#111"/><path d="M0 9l8-8M5 2l4 8M15 1l3-1M16 5l3-2" stroke="#777"/><circle cx="13" cy="14" r="5" fill="#eee" stroke="#222" stroke-width="1.500"/><path d="M10 12l5 5M15 12l-4 4" stroke="#222" stroke-width="1.500"/></svg>
    <span class="lb" style="width:40px">比例尺</span><div class="field m" style="width:103px">1:485534<b class="drop"></b></div>
    <svg class="lock" viewBox="0 0 18 20"><path d="M4 10V6c0-6 10-6 10 0v4" fill="none" stroke="#777" stroke-width="2"/><rect x="2" y="9" width="14" height="10" rx="1" fill="#666"/></svg>
    <span class="lb" style="width:41px">放大镜</span><div class="field m" style="width:104px">100%<b class="spin"></b></div>
    <span class="lb rot" style="width:61px">旋转角度</span><div class="field m" style="width:99px">0.0°<b class="spin"></b></div>
    <svg class="ck st"><use href="#tick"/></svg><span class="lb" style="width:44px">渲染</span>
    <svg class="gl" viewBox="0 0 20 20"><circle cx="10" cy="11" r="7.500" fill="#ddd" stroke="#888"/><path d="M1 9C3 3 7 1 10 1s7 2 9 8c-4 2-14 2-18 0z" fill="#777"/><path d="M2 6h16M10 2v16M6 2L5 17M14 2L15 17M3 13h14" stroke="#ccc" stroke-width=".9"/></svg>
    <span class="m ep">EPSG:4326</span>
    <svg class="bub" viewBox="0 0 20 20"><path d="M10 1c6 0 10 3 10 7s-3 6-6 7l2 5-6-4.500C4 15.500 0 12 0 8s4-7 10-7z" fill="#666"/><path d="M4.500 8h2.500M9 8h2.500M13.500 8H16" stroke="#fff" stroke-width="2"/></svg>
  </footer>
</div>

<div class="win save">
  <div class="wtitle"><svg class="i20"><use href="#logo"/></svg><span>矢量图层另存为...</span><svg class="x"><use href="#close"/></svg></div>
  <div class="form song">
    <div class="fr"><label>格式</label><div class="combo m grow">GeoPackage<b class="drop"></b></div></div>
    <div class="fr"><label>文件名称</label><div class="field focus grow"></div><div class="pb dots">···</div></div>
    <div class="fr"><label>图层名称</label><div class="field grow"></div></div>
    <div class="fr tall"><label>坐标参照系</label><div class="combo m crs">EPSG:4326 - WGS 84<b class="drop"></b></div><div class="pb cb"><svg viewBox="0 0 20 20"><use href="#crs"/><path d="M11 10h9v9h-9z" fill="#c8a20c"/><path d="M13 17l4.500-5" stroke="#fff" stroke-width="2"/></svg></div></div>
    <div class="area">
      <div class="inner">
        <div class="enc"><span>编码</span><div class="combo m dis">UTF-8<b class="drop off"></b></div></div>
        <div class="only"><i class="ck"></i>仅保存选中的要素</div>
        <div class="gt"><b></b>选择要导出的字段以及导出选项</div>
        <div class="gbox one">
          <div class="ftable">
            <div class="fh"><span class="c1">名称</span><span class="c2">类型</span></div>
            <div class="frow"><span class="c1"><svg class="ck"><use href="#tick"/></svg>NAME</span><span class="c2">String</span></div>
            <div class="frow"><span class="c1"><svg class="ck"><use href="#tick"/></svg>Shape_Leng</span><span class="c2">Real</span></div>
            <div class="frow"><span class="c1"><svg class="ck"><use href="#tick"/></svg>Shape_Area</span><span class="c2">Real</span></div>
          </div>
          <div class="two"><div class="pb">全选</div><div class="pb">全部不选</div></div>
        </div>
        <div class="gt second"><b></b>几何图形</div>
        <div class="gbox geo"><div class="enc"><span>几何图形类型</span><div class="combo">自动<b class="drop"></b></div></div><i class="ck"></i></div>
      </div>
      <div class="vscroll"><b class="btn up"></b><b class="thumb" style="height:223px"></b><b class="grow"></b><b class="btn down"></b></div>
    </div>
    <div class="foot"><svg class="ck"><use href="#tick"/></svg><span>将已保存的文件添加到地图中</span><div class="pb m dis">OK</div><div class="pb m">Cancel</div><div class="pb m">Help</div></div>
  </div>
</div>

<div class="win crsw">
  <div class="wtitle"><svg class="i20"><use href="#logo"/></svg><span>坐标参照系选择器</span><svg class="x"><use href="#close"/></svg></div>
  <div class="cbody song">
    <div class="msg">为矢量文件选择坐标参照系。数据点将从图层坐标参照系中变换。</div>
    <div class="filter"><span>过滤</span><div class="field"><svg class="i14"><use href="#lens"/></svg></div></div>
    <div class="h">最近使用过的坐标参照系</div>
    <div class="list recent"><div class="lh"><span>坐标参照系</span><span>管理机构标识符</span></div><div class="hscroll"><b class="btn lf"></b><b class="thumb grow"></b><b class="btn ri"></b></div></div>
    <div class="h pre"><span>预定义的坐标参考系</span><label><i class="ck"></i>隐藏废弃的坐标参照系</label></div>
    <div class="list all">
      <div class="cols">
        <div class="rows">
          <div class="lh"><span>坐标参照系</span><span>管理机构标识符</span></div>
          <div class="r"><span>WGS 84 / UTM zone 47N</span><span>EPSG:32647</span></div>
          <div class="r"><span>WGS 84 / UTM zone 47S</span><span>EPSG:32747</span></div>
          <div class="r"><span>WGS 84 / UTM zone 48N</span><span>EPSG:32648</span></div>
          <div class="r"><span>WGS 84 / UTM zone 48S</span><span>EPSG:32748</span></div>
          <div class="r"><span>WGS 84 / UTM zone 49N</span><span>EPSG:32649</span></div>
          <div class="r"><span>WGS 84 / UTM zone 49S</span><span>EPSG:32749</span></div>
          <div class="r"><span>WGS 84 / UTM zone 4N</span><span>EPSG:32604</span></div>
          <div class="r"><span>WGS 84 / UTM zone 4S</span><span>EPSG:32704</span></div>
          <div class="r"><span>WGS 84 / UTM zone 50N</span><span>EPSG:32650</span></div>
          <div class="r"><span>WGS 84 / UTM zone 50S</span><span>EPSG:32750</span></div>
          <div class="r sel"><span>WGS 84 / UTM zone 51N</span><span>EPSG:32651</span></div>
          <div class="r"><span>WGS 84 / UTM zone 51S</span><span>EPSG:32751</span></div>
          <div class="r"><span>WGS 84 / UTM zone 52N</span><span>EPSG:32652</span></div>
          <div class="r"><span>WGS 84 / UTM zone 52S</span><span>EPSG:32752</span></div>
          <div class="r"><span>WGS 84 / UTM zone 53N</span><span>EPSG:32653</span></div>
        </div>
        <div class="vscroll"><b class="btn up"></b><b class="track" style="height:273px"></b><b class="thumb" style="height:33px"></b><b class="grow"></b><b class="btn down"></b></div>
      </div>
      <div class="hscroll"><b class="btn lf"></b><b class="thumb" style="width:1056px"></b><b class="grow"></b><b class="btn ri"></b><b class="corner"></b></div>
    </div>
    <div class="bottom">
      <div class="wkt"><div class="wt"><p class="hd">WGS 84 / UTM zone 51N</p><p class="hd">WKT</p><pre>PROJCRS["WGS 84 / UTM zone 51N",
    BASEGEOGCRS["WGS 84",
        DATUM["World Geodetic System 1984",
            ELLIPSOID["WGS 84",6378137,298.257223563,
                LENGTHUNIT["metre",1]]],
        PRIMEM["Greenwich",0,
            ANGLEUNIT["degree",0.0174532925199433]],
        ID["EPSG",4326]],
    CONVERSION["UTM zone 51N",</pre></div>
        <div class="vscroll"><b class="btn up"></b><b class="thumb" style="height:41px"></b><b class="grow"></b><b class="btn down"></b></div></div>
      <div class="preview"><svg viewBox="57 488 1411 567" preserveAspectRatio="none">
        <g class="wl">
          <path d="M182 672L172 668 150 668 146 648 165 640 182 630 188 612 215 600 240 594 285 598 296 606 330 610 334 624 318 632 302 626 308 618 330 630 350 612 375 616 400 608 430 606 455 600 470 604 478 618 492 616 484 600 490 582 500 584 502 606 520 604 512 588 545 576 570 570 600 562 640 557 680 555 712 568 690 580 745 574 790 575 805 592 830 588 860 590 890 583 920 592 950 598 1000 598 1057 602 1057 628 1040 632 1056 642 1020 645 1000 656 984 654 962 690 935 712 932 686 945 670 976 648 955 656 940 665 900 662 865 662 840 680 830 692 855 695 862 715 858 740 845 755 825 768 810 778 795 778 785 790 795 805 795 820 780 825 775 805 770 792 750 795 740 782 738 798 762 800 750 815 745 825 756 845 757 860 745 880 725 890 700 895 690 905 672 898 655 905 660 915 680 935 688 955 672 968 655 965 650 952 635 940 632 955 640 985 652 1005 660 1026 645 1010 632 985 628 950 622 925 608 925 598 908 600 892 580 895 570 905 545 930 540 955 528 978 515 960 503 930 500 900 485 895 470 878 445 875 425 872 395 865 385 850 372 846 385 868 400 880 412 874 432 892 418 918 390 935 345 955 338 930 322 900 302 870 297 855 304 835 305 812 290 808 272 806 255 800 262 780 285 772 325 775 328 760 310 745 285 748 278 762 262 768 245 776 252 800 240 808 228 778 205 755 198 752 212 780 208 794 196 780 180 758 160 765 152 770 135 768 120 800 95 805 78 798 78 768 110 768 112 745 98 732 122 730 150 712 155 700 170 692z"/>
          <path d="M92 668L108 668 112 690 130 705 128 716 98 720 106 706 94 690zM70 692L86 688 92 700 84 712 70 710z"/>
          <path d="M57 860L85 820 110 804 172 800 178 826 210 840 232 828 252 836 298 838 300 856 316 896 332 930 345 962 386 958 372 995 342 1030 336 1055H180L170 1040 174 1018 160 1000 138 990 100 1000 78 998 57 984z"/>
          <path d="M392 590q40-30 88-34-40 8-66 26l-8 12zM932 712l-2-26 28-30 16 4-14 30zM862 700q12 30 4 46l6 14-12-4zM856 778l2 22-18 16-34 10 4-8 30-8 10-20zM690 1040l6-20 38-30 4 24-12 34-30 0zM612 1006l36 24 28 26-16 0zM537 974l10 8 0 10-8-2zM750 930l14-4 16 30-2 24-16-30zM785 1026l60 16 40 12h-80zM600 535l34 2 46 18-40-2zM178 542l50-6 14 10-30 10z"/>
        </g>
        <g class="wb">
          <path d="M182 690l2-34 24-40 36-16M240 600l4 20M260 600l20 8 4 36-20 12M155 740l30-4 4-32M120 730l34 14 6 20M200 694l44 4 4 24-30 4-22-4M218 656l30 2 16 22M228 680l40 2M246 690l34-4 10 22 36 12 0 24M160 740l50-4 26-10 40 4 30-16M190 750l20-16M206 752l24-14 30 12 12 14M236 730l6 24 6 22M230 752l40 0M78 776l34-6M88 776l0 26M270 778l-6 20M325 775l34 6 12 16 20 4M328 756l36 28"/>
          <path d="M370 720L426 712 446 698 486 690 536 710 576 726 566 738 538 758 502 764 464 770 430 758 408 768 396 748M576 726L610 716 635 712 682 724 710 724 744 738 714 766 654 772 608 754zM742 736L750 704 770 700 786 722 820 732 800 774 760 786M576 726L552 748 548 762 510 780 516 790 536 826 564 846 604 850 628 866 638 890 656 888 680 896"/>
          <path d="M412 768L458 790 498 780M414 772l6 14 40 26M360 780L376 800 420 794 450 812 444 868M450 812L480 800 510 802 540 828 530 820 502 824 490 866 444 870M536 850l30 16 36-2M480 895l8-24M604 854l-24 16-2 20M610 866l-12 24M628 866l-20 20M640 892l-4 28 20-10 18 30M650 925l24-6M464 776l30 6-14 18"/>
          <path d="M87 820L57 858M57 870l30 0 60 40 50-30M87 874v60H60M174 832v30L200 886 250 908V832M250 893H312M246 893l0 76M200 888L196 950 144 952 130 938 146 908M60 940l50 6 14 12M80 962v38M110 960v36M125 952l12 40M144 952l-8 40M196 950l10 30-22 40M206 978l40-12 50 10 20-34 30 18M296 976l20 28 50-4M316 1004l-14 50M206 1000l70 6 4 48M302 1006l34 2M300 842l36 16 50 56-54 8M308 804l30 10 40 58M334 806l20-8M312 836l28-22M386 914l20-16M345 955l-10-14"/>
        </g>
        <g class="wb"><path class="sea" d="M376 744L398 742 392 760 402 768 396 778 400 798 386 800 380 780 368 762z"/><path class="sea" d="M274 764q10-20 24-14l8 6 24 10q-28 14-56 6zM222 660l14-28 22-4-14 20 10 6-20 26-14-4z"/></g>
        <g class="isl"><path d="M180 540l60-4M190 550l40 0M360 534l90-4M400 540l50 0M600 536l80 14M820 566l80-4M840 574l70-2M1040 600l16-4M870 760l50-44 40-36M985 690l6 2M1018 706l40 6M795 826l50-14M798 840l-6 20-20 24M750 850v80M756 900l14 40M603 930l4 50M502 960v80M848 812l10 60M878 905l2 44M800 985l20-16M760 960l16 20M800 1040l120 8M1010 975l20 60M850 965l60 20M150 650l36-44 100-10M250 790l16 22M130 790l40-16"/></g>
        <path d="M106 1030h31M121.500 1012v35" stroke="#b94fd0" stroke-width="7"/>
        <rect x="743.500" y="510" width="35" height="522" fill="#f55" fill-opacity=".4" stroke="#f55" stroke-opacity=".55" stroke-width="8"/>
      </svg></div>
    </div>
    <div class="foot"><div class="pb m focus">OK</div><div class="pb m">Cancel</div><div class="pb m">Help</div></div>
  </div>
</div>

<div class="menu ctx">
  <div class="mi"><svg><use href="#zlay"/></svg>缩放到图层范围(<u>Z</u>)</div>
  <div class="mi dis"><svg><use href="#zlay"/></svg>缩放到选中的区域(<u>Z</u>)</div>
  <div class="mi"><svg><use href="#glasses"/></svg>在鹰眼图中显示(<u>S</u>)</div>
  <div class="mi"><i class="ck"></i>显示要素数目</div>
  <div class="mi">复制图层</div>
  <div class="mi">重命名图层(<u>N</u>)</div><hr>
  <div class="mi"><svg><use href="#dup"/></svg>创建图层副本(<u>D</u>)</div>
  <div class="mi"><svg><use href="#rmlay"/></svg>移除图层(<u>R</u>)...</div><hr>
  <div class="mi">移到顶层(<u>T</u>)</div><hr>
  <div class="mi"><svg><use href="#table"/></svg>打开属性表(<u>O</u>)</div>
  <div class="mi"><svg><use href="#pencil"/></svg>切换编辑状态</div>
  <div class="mi">过滤(<u>F</u>)...</div>
  <div class="mi">更换数据源...</div><hr>
  <div class="mi">设置图层的比例尺可见性(<u>S</u>)</div>
  <div class="mi">设置坐标参照系<b class="rt"></b></div><hr>
  <div class="mi hot">导出<b class="rt"></b></div><hr>
  <div class="mi">样式<b class="rt"></b></div>
  <div class="mi">属性...(<u>P</u>)</div>
</div>
<div class="menu subm">
  <div class="mi hot">另存要素为...</div>
  <div class="mi dis">另存选中的要素为...</div>
  <div class="mi">另存为图层定义文件...</div>
  <div class="mi">另存为QGIS图层样式文件...</div>
</div>

<svg class="marks" viewBox="0 0 2561 1389">
  <g fill="none" stroke="#ed1c24" stroke-width="4"><rect x="1098" y="231" width="52" height="44" rx="1"/><rect x="1188" y="820.500" width="1103" height="26.500" rx="1"/></g>
  <g fill="#ed1c24"><path d="M1242 136l-24 15 8 2-65 97 2 2 70-94 5 5z"/><path d="M838 776l-23 17 8 2-23 60 2 1 31-57 7 7z"/><path d="M2047 1023l14-23 4 7 54-36 1 2-50 40 6 5z"/></g>
</svg>
<div class="note n1">在投影坐标系中<br>选中 51N 投影带（北半球）</div>
<div class="note n2">投影带示意图</div>
</body>
</html>
```
FILE: styles.css
```css
* { box-sizing: border-box; }
html { overflow: hidden; }
body { margin: 0; width: 2561px; height: 1389px; overflow: hidden; position: relative; background: #efefef; color: #000; font: 15px/22px "Open Sans", "Noto Sans CJK SC", sans-serif; }
svg { display: block; flex: none; }
ul { margin: 0; padding: 0; list-style: none; }
b, i { font-style: normal; }
.defs { display: none; }
.i20 { width: 20px; height: 20px; }
.i14 { width: 14px; height: 14px; }
.grow { flex: 1; }
.en { font-size: 16px; letter-spacing: -0.12px; }
.song { font-family: "Liberation Serif", "Noto Sans CJK SC", sans-serif; font-weight: 300; }
.m { font-family: "Liberation Mono", monospace; font-size: 14px; letter-spacing: -0.4px; font-weight: 400; }

.app { display: flex; flex-direction: column; height: 1389px; overflow: hidden; }
.titlebar { display: flex; align-items: center; height: 29px; background: #fff; padding-left: 2px; gap: 6px; flex: none; }
.apptitle { font-size: 16px; letter-spacing: 0.5px; margin-top: -2px; }
.winbtns { margin-left: auto; display: flex; gap: 45px; padding-right: 24px; }
.winbtns svg { width: 14px; height: 14px; }
.menubar { display: flex; height: 24px; padding-left: 11px; line-height: 24px; flex: none; border-bottom: 1px solid #d0d0d0; white-space: nowrap; }
.menubar span { flex: none; }
.menubar i { color: #a8a8a8; }
.toolbar { display: flex; align-items: center; height: 39px; flex: none; border-bottom: 1px solid #b9b9b9; background: linear-gradient(#fbfbfb, #efefef); }
.tb { width: 33px; height: 32px; display: flex; align-items: center; justify-content: center; flex: none; }
.tb svg { width: 23px; height: 23px; overflow: visible; }
.tb.on { background: #dcdcdc; border: 1px solid #a9a9a9; border-radius: 3px; width: 31px; margin: 0 1px; }
.tb.off svg { opacity: .3; filter: saturate(.5); }
.grip { width: 15px; height: 18px; background: radial-gradient(circle, #b5b5b5 1px, transparent 1.200px) 6px 0 / 4px 4px repeat; background-clip: content-box; padding: 0 4px 0 5px; }
.grip.wide { width: 18px; padding: 0 4px 0 8px; }
.vsep { width: 21px; height: 20px; background: linear-gradient(#ccc, #ccc) 2px 0 / 1px 100% no-repeat; margin-right: -16px; margin-left: 3px; }
.drop { width: 16px; display: flex; justify-content: center; flex: none; }
.drop.narrow { width: 14px; }
.drop::after { content: ""; border: 5px solid transparent; border-top: 6px solid #4a4a4a; border-bottom: 0; }
.drop.off::after { border-top-color: #a0a0a0; }

.work { display: flex; flex: 1; min-height: 0; }
.left { width: 341px; display: flex; flex-direction: column; margin-right: 8px; flex: none; }
.docktitle { display: flex; align-items: center; height: 24px; padding: 0 2px 1px 4px; gap: 2px; flex: none; }
.docktitle span { flex: 1; }
.docktitle svg { width: 12px; height: 12px; margin-top: -1px; }
.dockbar { display: flex; align-items: center; height: 27px; padding: 0 0 5px 7px; gap: 8px; flex: none; }
.dockbar svg { width: 17px; height: 17px; }
.browser { height: 600px; border: 1px solid #b0b0b0; display: flex; flex-direction: column; background: #fff; flex: none; }
.treewrap { flex: 1; display: flex; min-height: 0; overflow: hidden; }
.tree { flex: 1; overflow: hidden; white-space: nowrap; }
.tree li { display: flex; align-items: center; height: 22px; padding-left: 4px; }
.tree li > b { width: 17px; display: flex; justify-content: center; flex: none; }
.tree li > svg { width: 19px; height: 19px; margin: 0 6px 0 8px; }
.tree li.sub { padding-left: 29px; }
.rt::after { content: ""; border: 5px solid transparent; border-left: 6px solid #4f4f4f; border-right: 0; }
.dn::after { content: ""; border: 5px solid transparent; border-top: 6px solid #4f4f4f; border-bottom: 0; }
.vscroll { width: 18px; display: flex; flex-direction: column; border-left: 1px solid #b5b5b5; background: #e6e6e6; flex: none; }
.hscroll { height: 18px; display: flex; border-top: 1px solid #b5b5b5; background: #e6e6e6; flex: none; }
.btn { width: 17px; height: 17px; background: #f8f8f8; display: flex; align-items: center; justify-content: center; flex: none; }
.vscroll .thumb { background: linear-gradient(90deg, #fff, #efefef); border: solid #b5b5b5; border-width: 1px 0; }
.hscroll .thumb { background: linear-gradient(#fff, #efefef); border: solid #b5b5b5; border-width: 0 1px; }
.btn::after { content: ""; border: 5px solid transparent; }
.up::after { border-bottom: 6px solid #4f4f4f; border-top: 0; }
.down { border-top: 1px solid #b5b5b5; }
.down::after { border-top: 6px solid #4f4f4f; border-bottom: 0; }
.lf::after { border-right: 6px solid #4f4f4f; border-left: 0; }
.ri { border-left: 1px solid #b5b5b5; }
.ri::after { border-left: 6px solid #4f4f4f; border-right: 0; }
.split { height: 7px; line-height: 5px; text-align: center; color: #999; font-size: 10px; flex: none; }
.docktitle.lay { height: 21px; }
.dockbar.lay { padding-bottom: 0; height: 26px; }
.dockbar .drop { margin: 0 -3px 0 -6px; }
.layers { flex: 1; border: 1px solid #b0b0b0; background: #fff; margin-top: 3px; padding-top: 1px; }
.layer { display: flex; align-items: center; height: 19.700px; padding-left: 28px; font-weight: 700; line-height: 19px; }
.layer .sy { width: 20px; height: 20px; margin: 0 6px 0 6px; }
.layer .sy.tiny { width: 4px; margin-right: 5px; }
.layer.sel { background: #1080dc; color: #fff; font-weight: 500; }
.ck { width: 17px; height: 17px; border: 1px solid #a8a8a8; background: #fff; flex: none; display: block; }
.canvas { flex: 1; background: #fff; border: 1px solid #b0b0b0; margin-top: 1px; position: relative; }
.shmap { position: absolute; left: 610px; top: 508px; width: 240px; height: 460px; }
.land { fill: #bccf50; stroke: #222; stroke-width: 4; stroke-linejoin: round; }
.line { fill: none; stroke: #222; stroke-width: 4; stroke-linejoin: round; }
.pts { fill: #ff9e17; stroke: #4d3b1c; stroke-width: 2.500; }
.right { width: 297px; margin-left: 9px; display: flex; flex-direction: column; flex: none; }
.right .dockbar { padding-left: 56px; gap: 7px; }
.right .dockbar b { width: 1px; height: 12px; background: #ccc; margin: 0 1px; }
.right .g { opacity: .6; }
.find { height: 23px; border: 1px solid #a5a5a5; border-radius: 2px; background: #fff; color: #777; padding-left: 28px; letter-spacing: 1px; line-height: 21px; flex: none; }
.tools { flex: 1; background: #fff; border: 1px solid #b0b0b0; padding: 0 0 0 53px; }
.tools li { height: 22px; }

.status { height: 32px; display: flex; align-items: center; flex: none; font: 300 13px/20px "Noto Sans CJK SC", sans-serif; }
.field { border: 1px solid #a5a5a5; border-radius: 3px; background: #fff; display: flex; align-items: center; }
.field.focus, .pb.focus { border-color: #3ca0ec; }
.status .field { height: 22px; padding-left: 6px; flex: none; }
.status .field b { margin-left: auto; }
.status .m { font-size: 12.500px; letter-spacing: -0.5px; }
.status .locate { width: 244px; margin: 0 1420px 0 4px; gap: 8px; color: #777; }
.status .locate .m { letter-spacing: -0.2px; margin-left: 3px; }
.lb { flex: none; }
.sat { width: 22px; height: 20px; margin: 0 9px 0 4px; }
.lock { width: 18px; height: 20px; margin: 0 9px 0 12px; }
.rot { padding-left: 0; margin-left: 11px; }
.spin { width: 16px; height: 20px; border-left: 1px solid #a5a5a5; display: flex; flex-direction: column; align-items: center; justify-content: center; gap: 3px; }
.spin::before { content: ""; border: 5px solid transparent; border-bottom: 6px solid #555; border-top: 0; }
.spin::after { content: ""; border: 5px solid transparent; border-top: 6px solid #555; border-bottom: 0; }
.ck.st { margin: 0 6px 0 7px; }
.sat + .lb { margin-left: 5px; }
.gl { width: 18px; height: 18px; margin-right: 5px; }
.ep { width: 91px; }
.bub { width: 20px; height: 19px; }

.win { position: absolute; border: 1px solid #555; background: #efefef; display: flex; flex-direction: column; box-shadow: 0 2px 8px rgba(0,0,0,.12); }
.win.save { left: 568px; top: 89px; width: 593px; height: 671px; }
.win.crsw { left: 1180px; top: 89px; width: 1135px; height: 1098px; }
.wtitle { height: 37px; background: #fff; display: flex; align-items: center; padding: 0 14px 1px 10px; gap: 4px; flex: none; }
.wtitle span { flex: 1; margin-top: -1px; }
.wtitle .x { width: 14px; height: 14px; }
.form { flex: 1; padding: 24px 13px 0; display: flex; flex-direction: column; }
.fr { display: flex; height: 23px; margin: 0 11px 7px 11px; align-items: stretch; flex: none; }
.fr label { width: 82px; }
.fr.tall { height: 28px; margin-bottom: 17px; line-height: 28px; }
.combo { border: 1px solid #a5a5a5; border-radius: 3px; background: linear-gradient(#fff, #efefef); display: flex; align-items: center; padding: 0 7px 0 3px; justify-content: space-between; }
.combo.crs { width: 427px; margin-right: 6px; padding-right: 6px; }
.dis { color: #808080; }
.combo.dis, .pb.dis { border-color: #c0c0c0; }
.pb { border: 1px solid #a5a5a5; border-radius: 3px; background: linear-gradient(#fff, #efefef); display: flex; align-items: center; justify-content: center; }
.dots { width: 39px; margin-left: 7px; font-weight: 700; letter-spacing: 0; }
.cb { width: 28px; }
.cb svg { width: 20px; height: 20px; }
.area { height: 430px; border: 1px solid #b5b5b5; display: flex; flex: none; overflow: hidden; }
.inner { flex: 1; padding: 11px 11px 0 12px; height: 428px; overflow: hidden; }
.enc { display: flex; justify-content: space-between; height: 23px; }
.enc .combo { width: 257px; }
.only { display: flex; align-items: center; gap: 7px; color: #808080; height: 34px; padding-bottom: 1px; }
.only .ck { border-color: #c0c0c0; background: #f4f4f4; }
.gt { font-weight: 700; font-size: 16px; height: 22px; display: flex; align-items: center; gap: 10px; line-height: 20px; padding: 0 0 2px 1px; }
.gt b { border: 6px solid transparent; border-top: 8px solid #333; border-bottom: 0; }
.gbox { border: 1px solid #d5d5d5; border-radius: 2px; background: #ececec; padding: 12px 13px 0 12px; height: 258px; }
.ftable { height: 200px; border: 1px solid #b0b0b0; background: #fff; font: 15px/22px "Open Sans", "Noto Sans CJK SC", sans-serif; }
.fh { background: #efefef; height: 23px; display: flex; text-align: center; }
.fh span { background: linear-gradient(#fff, #ececec); border-bottom: 1px solid #a5a5a5; }
.c1 { width: 118px; border-right: 1px solid #c5c5c5; display: flex; align-items: center; gap: 6px; padding-left: 3px; justify-content: flex-start; }
.c2 { width: 51px; border-right: 1px solid #c5c5c5; display: flex; align-items: center; padding-left: 3px; }
.fh .c1, .fh .c2 { justify-content: center; padding: 0; }
.frow { display: flex; height: 37px; font-size: 16px; letter-spacing: -0.12px; }
.frow span { border-bottom: 1px solid #c5c5c5; padding-bottom: 1px; }
.two { display: grid; grid-template-columns: 1fr 1fr; gap: 8px; margin-top: 7px; }
.two .pb { height: 24px; padding-bottom: 1px; }
.gt.second { margin: 5px 0 2px; }
.gbox.geo { height: 80px; }
.geo .enc { height: 29px; line-height: 27px; }
.geo .enc .combo { width: 244px; }
.geo .ck { margin-top: 8px; }
.foot { display: flex; align-items: center; justify-content: flex-end; gap: 7px; height: 37px; }
.foot .pb { width: 80px; height: 24px; }
.foot > span { margin-right: 6px; }

.cbody { flex: 1; padding: 3px 3px 0; display: flex; flex-direction: column; }
.cbody > div { flex: none; }
.msg { height: 160px; border: 1px solid #b0b0b0; background: #fff; padding: 1px 4px; }
.filter { display: flex; align-items: center; height: 24px; margin-top: 6px; }
.filter span { width: 36px; padding-left: 1px; }
.filter .field { flex: 1; height: 24px; padding-left: 8px; }
.h { font-weight: 700; font-size: 16px; height: 26px; line-height: 24px; padding-left: 1px; }
.list { border: 1px solid #b0b0b0; background: #fff; }
.recent { height: 200px; display: flex; flex-direction: column; justify-content: space-between; }
.lh { display: flex; height: 23px; line-height: 21px; background: linear-gradient(#fff, #ebebeb); border-bottom: 1px solid #a5a5a5; }
.lh span { padding-left: 3px; width: 886px; border-right: 1px solid #b5b5b5; flex: none; }
.lh span + span { width: auto; border: 0; }
.h.pre { height: 33px; line-height: 31px; display: flex; justify-content: space-between; }
.h label { font-weight: 300; font-size: 15px; display: flex; align-items: center; gap: 7px; margin-right: 5px; }
.all { height: 376px; display: flex; flex-direction: column; }
.cols { display: flex; flex: 1; min-height: 0; }
.rows { flex: 1; min-width: 0; overflow: hidden; }
.r { display: flex; height: 22px; font: 16px/21px "Open Sans", sans-serif; letter-spacing: -0.12px; background: #fff; }
.r:nth-child(even) { background: #e8e7e3; }
.r span:first-child { width: 811px; padding-left: 3px; margin-left: 75px; flex: none; }
.r span + span { padding-left: 4px; flex: 1; min-width: 0; }
.rows .r.sel { background: #0078d7; color: #fff; }
.r.sel span:first-child { background: linear-gradient(#1c88e0, #0c80da); }
.corner { width: 18px; background: #efefef; border-left: 1px solid #b5b5b5; }
.bottom { display: flex; gap: 6px; height: 192px; margin-top: 6px; }
.wkt { width: 561px; border: 1px solid #b0b0b0; background: #fff; display: flex; overflow: hidden; }
.wt { flex: 1; padding: 1px 4px; font: 13.330px/16px "Liberation Mono", monospace; }
.hd { margin: 3px 0 11px; font-weight: 700; line-height: 16px; }
.hd + .hd { margin-bottom: 0; }
pre { margin: 0 0 0 30px; font: inherit; color: #222; }
.preview { flex: 1; border: 1px solid #b0b0b0; background: #fff; overflow: hidden; }
.preview svg { width: 100%; height: 190px; }
.wl { fill: #ebe9df; stroke: #8e8c82; stroke-width: 2.800; stroke-linejoin: round; }
.wb { fill: none; stroke: #8e8c82; stroke-width: 2.800; stroke-linejoin: round; }
.sea { fill: #fff; }
.isl { fill: none; stroke: #8e8c82; stroke-width: 5; stroke-dasharray: 4 5 9 6 2 8; }
.cbody .foot { height: 36px; }

.menu { position: absolute; background: #fff; border: 1px solid #a0a0a0; box-shadow: 3px 3px 4px rgba(0,0,0,.35); }
.ctx { left: 241px; top: 436px; width: 302px; height: 517px; }
.subm { left: 542px; top: 865px; width: 256px; height: 113px; }
.mi { height: 28px; line-height: 26px; padding: 0 0 2px 32px; display: flex; align-items: center; white-space: nowrap; }
.mi svg { width: 20px; height: 20px; margin: 0 6px 0 -26px; }
.mi .ck { width: 18px; height: 18px; margin: 0 7px 0 -25px; }
.mi.dis { color: #787878; }
.mi.dis svg { opacity: .4; }
.mi .rt { margin: 0 6px 0 auto; display: flex; }
.mi.hot { background: #0078d7; color: #fff; box-shadow: inset 0 0 0 1px #3fa4f2; }
.mi.hot .rt::after { border-left-color: #8cc4f0; }
.ctx hr { height: 2px; border: 0; margin: 0 5px; background: linear-gradient(#bbb, #bbb) 0 0 / 100% 1px no-repeat; }
.marks { position: absolute; left: 0; top: 0; width: 2561px; height: 1389px; }
.note { position: absolute; color: #ed1c24; font: 700 20.200px/27px "Noto Sans CJK SC", sans-serif; white-space: nowrap; }
.n1 { left: 1460px; top: 760px; }
.n2 { left: 2124px; top: 952px; }
```
